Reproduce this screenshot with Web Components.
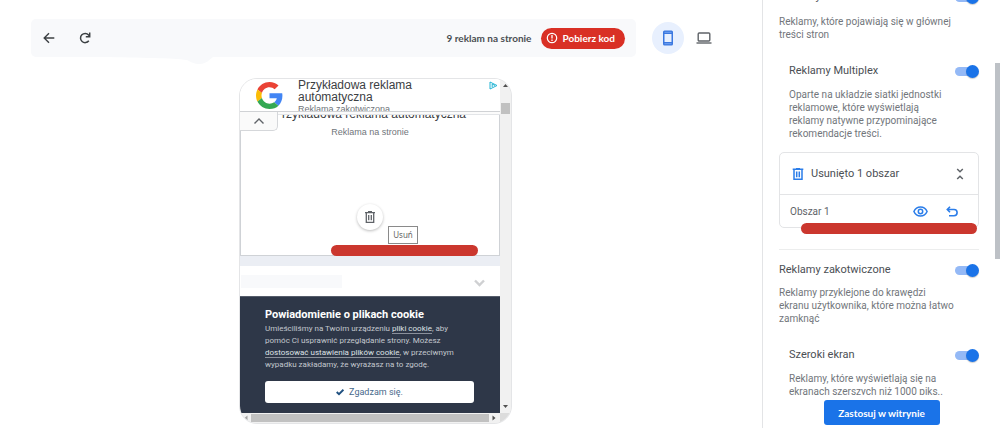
<!DOCTYPE html>
<html lang="pl">
<head>
<meta charset="utf-8">
<title>Reklamy automatyczne</title>
<style>
  html, body { margin: 0; height: 100%; }
  body { font-family: Roboto, "Liberation Sans", sans-serif; background: #fff; color: #5f6368; overflow: hidden; }
</style>
</head>
<body>
<ads-app></ads-app>

<template id="t-app">
  <style>
    :host { display: flex; height: 100vh; overflow: hidden; }
    main { flex: 1; min-width: 0; display: flex; flex-direction: column; gap: 21px; padding: 19px 42px 0 31px; }
    phone-preview { align-self: center; }
  </style>
  <main>
    <preview-toolbar></preview-toolbar>
    <phone-preview>
      <anchor-ad slot="page"></anchor-ad>
      <page-ad slot="page"></page-ad>
      <site-header slot="page"></site-header>
      <cookie-notice slot="page"></cookie-notice>
    </phone-preview>
  </main>
  <settings-panel>
    <ad-setting class="first" label="Reklamy na stronie">Reklamy, które pojawiają się w głównej treści stron</ad-setting>
    <ad-setting nested label="Reklamy Multiplex">Oparte na układzie siatki jednostki reklamowe, które wyświetlają reklamy natywne przypominające rekomendacje treści.</ad-setting>
    <removed-areas></removed-areas>
    <ad-setting divided label="Reklamy zakotwiczone">Reklamy przyklejone do krawędzi<br>ekranu użytkownika, które można łatwo<br>zamknąć</ad-setting>
    <ad-setting nested label="Szeroki ekran">Reklamy, które wyświetlają się na ekranach szerszych niż 1000 piks..</ad-setting>
  </settings-panel>
</template>

<template id="t-toolbar">
  <style>
    :host { display: flex; align-items: center; font-family: "Google Sans", Lato, sans-serif; }
    button { border: 0; padding: 0; background: none; font: inherit; color: #3c4043; display: flex; align-items: center; justify-content: center; }
    .bar { position: relative; flex: 1; display: flex; align-items: center; height: 38px; padding: 0 11px 0 6px; background: #f8f9fb; border-radius: 5px; }
    .bump { position: absolute; left: 70px; top: 100%; }
    .icon { width: 24px; height: 24px; }
    .reload { margin-left: 12px; }
    .count { margin-left: auto; font-size: 10px; font-weight: 700; color: #4b4f53; }
    .bar .code { margin-left: 10px; height: 21px; padding: 0 10px 0 5px; gap: 4px; border-radius: 11px; background: #d93025; color: #fff; font-size: 10px; font-weight: 700; }
    .device { width: 32px; height: 32px; border-radius: 50%; }
    .device.on { margin: 0 4px 0 16px; background: #e8f0fe; }
  </style>
  <div class="bar">
    <svg class="bump" width="115" height="8" viewBox="0 0 115 8"><path d="M0 0H112C108 3 105 7 99 7S90 5 86 3C72 1 40 1 0 0Z" fill="#f8f9fb"/></svg>
    <button class="icon" aria-label="Wstecz"><svg width="12" height="12" viewBox="0 0 12 12" fill="none" stroke="#3c4043" stroke-width="1.4"><path d="M11.300 6H1.500M6 1.200L1.200 6L6 10.800"/></svg></button>
    <button class="icon reload" aria-label="Odśwież"><svg width="12" height="12" viewBox="0 0 12 12" fill="none" stroke="#3c4043" stroke-width="1.500"><path d="M9.800 8.800A4.600 4.600 0 1 1 9.600 3L10.400 3.900"/><path d="M6.800 4.700H10.700V.6"/></svg></button>
    <span class="count">9 reklam na stronie</span>
    <button class="code"><svg width="12" height="12" viewBox="0 0 12 12" fill="none" stroke="#fff"><circle cx="6" cy="6" r="4.700" stroke-width="1.200"/><path d="M6 3v3.600M6 7.600v1.300" stroke-width="1.300"/></svg>Pobierz kod</button>
  </div>
  <button class="device on" aria-label="Telefon"><svg width="12" height="16" viewBox="0 0 12 16"><rect x="1" y=".5" width="10" height="15" rx="1.500" fill="#3b78e0"/><rect x="2.500" y="4" width="7" height="8" fill="#e8f0fe"/><path d="M2.500 2.300h7M2.500 13.700h7" stroke="#8ab4f8" stroke-width=".7"/></svg></button>
  <button class="device" aria-label="Komputer"><svg width="16" height="12" viewBox="0 0 16 12" fill="none" stroke="#5f6368" stroke-width="1.400"><rect x="2.200" y="1" width="11.600" height="8" rx="1"/><path d="M.5 11H15.500"/></svg></button>
</template>

<template id="t-phone">
  <style>
    :host { display: grid; grid-template-columns: 260px 11px; border: 1px solid #e4e5e7; border-radius: 18px; overflow: hidden; background: #f1f1f1; }
    .view { display: flex; flex-direction: column; min-width: 0; overflow: hidden; background: #fff; }
    .v { display: flex; flex-direction: column; align-items: center; padding: 3px 0; background: #f1f1f1; }
    .v i { width: 9px; height: 11px; background: #c1c1c1; margin-top: 14px; }
    .v svg:last-child { margin-top: auto; }
    .h { display: flex; align-items: center; gap: 3px; padding: 0 4px; background: #f1f1f1; }
    .h i { flex: 1; height: 8px; background: #c1c1c1; }
    .corner { height: 10px; background: #dcdcdc; }
  </style>
  <div class="view"><slot name="page"></slot></div>
  <div class="v">
    <svg width="7" height="7"><path d="M1 5L3.500 2L6 5Z" fill="#505050"/></svg><i></i><svg width="7" height="7"><path d="M1 2L3.500 5L6 2Z" fill="#505050"/></svg>
  </div>
  <div class="h">
    <svg width="4" height="6"><path d="M3.500 .5L.5 3L3.500 5.500Z" fill="#a3a3a3"/></svg><i></i><svg width="4" height="6"><path d="M.5 .5L3.500 3L.5 5.500Z" fill="#505050"/></svg>
  </div>
  <div class="corner"></div>
</template>

<template id="t-anchor">
  <style>
    :host { display: block; position: relative; z-index: 1; font-family: "Liberation Sans", Arial, sans-serif; }
    .ad { display: flex; height: 33px; padding: 0 2px 0 16px; box-sizing: border-box; background: #fff; border-bottom: 1px solid #d0d2d5; overflow: hidden; }
    .logo { flex: none; margin: 3px 15px 0 0; }
    .text { flex: 1; font-size: 12px; line-height: 12px; color: #3c4043; }
    .text small { display: block; font-size: 9px; color: #70757a; }
    .info { margin-top: 2px; }
    .strip { height: 3px; background: #fbfbfb; border-bottom: 1px solid #e3e5e8; box-sizing: border-box; }
    button { position: absolute; left: 0; top: 33px; width: 38px; height: 19px; padding: 0; border: 1px solid #d5d7da; border-width: 0 1px 1px 0; border-radius: 0 0 5px 0; background: #fafafa; display: flex; align-items: center; justify-content: center; }
  </style>
  <div class="ad">
    <svg class="logo" width="27" height="27" viewBox="0 0 48 48"><path fill="#EA4335" d="M24 9.500c3.540 0 6.710 1.220 9.210 3.600l6.850-6.850C35.900 2.380 30.470 0 24 0 14.620 0 6.510 5.380 2.560 13.220l7.980 6.190C12.430 13.720 17.740 9.500 24 9.500z"/><path fill="#4285F4" d="M46.980 24.550c0-1.570-.15-3.090-.38-4.550H24v9.020h12.940c-.58 2.960-2.260 5.480-4.780 7.180l7.730 6c4.510-4.180 7.090-10.360 7.090-17.650z"/><path fill="#FBBC05" d="M10.530 28.590c-.48-1.450-.76-2.990-.76-4.590s.27-3.140.76-4.590l-7.980-6.190C.92 16.460 0 20.120 0 24s.92 7.540 2.560 10.780l7.970-6.190z"/><path fill="#34A853" d="M24 48c6.480 0 11.930-2.130 15.890-5.810l-7.730-6c-2.150 1.450-4.920 2.300-8.160 2.300-6.260 0-11.570-4.220-13.470-9.910l-7.980 6.190C6.510 42.620 14.620 48 24 48z"/></svg>
    <div class="text">Przykładowa reklama<br>automatyczna<small>Reklama zakotwiczona</small></div>
    <svg class="info" width="9" height="9" viewBox="0 0 9 9" fill="none" stroke="#24b4d4" stroke-width="1"><path d="M1 1L8 4.500L1 8Z"/><path d="M3.200 3v3M3.200 3L6 4.500"/></svg>
  </div>
  <div class="strip"></div>
  <button aria-label="Zwiń"><svg width="12" height="8" viewBox="0 0 12 8" fill="none" stroke="#5f6368" stroke-width="1.400"><path d="M1.500 6.500L6 2L10.500 6.500"/></svg></button>
</template>

<template id="t-pagead">
  <style>
    :host { display: block; position: relative; height: 141px; box-sizing: border-box; overflow: visible; border: 1px solid #cfd2d6; border-top: 0; text-align: center; font-family: "Liberation Sans", Arial, sans-serif; }
    .title { margin-top: -7px; font-size: 12px; line-height: 12px; color: #3c4043; }
    .sub { margin-top: 6px; font-size: 9px; line-height: 12px; color: #70757a; }
    button { position: absolute; left: 50%; top: 89px; width: 26px; height: 26px; margin-left: -13px; padding: 0; border: 0; border-radius: 50%; background: #fff; box-shadow: 0 1px 3px #0004; display: flex; align-items: center; justify-content: center; }
    .tip { position: absolute; left: 147px; top: 111px; width: 28px; height: 16px; border: 1px solid #8a8a8a; background: #fff; font: 8px/16px "Noto Sans", sans-serif; color: #666; }
    .mark { position: absolute; left: 90px; right: 21px; bottom: -1px; height: 11px; border-radius: 6px; background: #cb372e; }
  </style>
  <div class="title">Przykładowa reklama automatyczna</div>
  <div class="sub">Reklama na stronie</div>
  <button aria-label="Usuń"><svg width="12" height="12" viewBox="0 0 12 12" fill="none" stroke="#5f6368" stroke-width="1.300"><path d="M1 1.700H11M4 .7H8M2.300 2V11.300H9.700V2M4.700 4V9.300M7.300 4V9.300"/></svg></button>
  <div class="tip" role="tooltip">Usuń</div>
  <div class="mark"></div>
</template>

<template id="t-site">
  <style>
    :host { display: block; border-top: 10px solid #ebeef4; }
    .row { display: flex; justify-content: space-between; align-items: center; height: 30px; padding: 0 15px 0 1px; }
    .name { width: 101px; height: 13px; background: #f8f9fb; }
    button { border: 0; padding: 0; background: none; display: flex; margin-top: 4px; }
  </style>
  <div class="row"><span class="name"></span><button aria-label="Rozwiń"><svg width="11" height="8" viewBox="0 0 11 8" fill="none" stroke="#cfd0d2" stroke-width="2.400"><path d="M1 1.500L5.500 6L10 1.500"/></svg></button></div>
</template>

<template id="t-cookie">
  <style>
    :host { display: block; padding: 11px 26px 10px 25px; background: #2e3748; color: #c3c7ce; border-top: 1px solid #565d6b; }
    h2 { margin: 0; font-size: 11px; line-height: 14px; font-weight: 700; color: #fff; white-space: nowrap; }
    p { margin: 1px 0 10px; font-size: 8px; line-height: 12px; white-space: nowrap; }
    a { color: #dfe2e6; text-decoration: none; border-bottom: 1px solid #8a909b; }
    button { width: 100%; height: 22px; border: 0; border-radius: 3px; background: #fff; color: #47698b; font: 9px Roboto, sans-serif; display: flex; align-items: center; justify-content: center; gap: 5px; padding: 0; }
  </style>
  <h2>Powiadomienie o plikach cookie</h2>
  <p>Umieściliśmy na Twoim urządzeniu <a href="#cookie">pliki cookie</a>, aby<br>pomóc Ci usprawnić przeglądanie strony. Możesz<br><a href="#ustawienia">dostosować ustawienia plików cookie</a>, w przeciwnym<br>wypadku zakładamy, że wyrażasz na to zgodę.</p>
  <button><svg width="8" height="8" viewBox="0 0 8 8" fill="none" stroke="#1f5080" stroke-width="1.900"><path d="M.7 4L3 6.200L7.400 1.700"/></svg>Zgadzam się.</button>
</template>

<template id="t-panel">
  <style>
    :host { display: flex; flex-direction: column; position: relative; width: 237px; flex: none; border-left: 1px solid #e3e4e6; background: #fff; }
    .scroll { flex: 1; min-height: 0; overflow: hidden; padding: 0 21px 0 16px; }
    ::slotted(.first) { margin-top: -10px; }
    footer { height: 33px; box-sizing: border-box; padding-top: 5px; display: flex; justify-content: center; }
    button { width: 116px; height: 25px; border: 0; border-radius: 3px; padding: 0; background: #1a73e8; color: #fff; font: 700 10px "Google Sans", Lato, sans-serif; }
    .thumb { position: absolute; right: 0; top: 63px; width: 5px; height: 196px; background: #bdc1c6; }
  </style>
  <div class="scroll"><slot></slot></div>
  <footer><button>Zastosuj w witrynie</button></footer>
  <div class="thumb"></div>
</template>

<template id="t-setting">
  <style>
    :host { display: block; }
    :host([nested]) { padding: 23px 0 0 10px; --gap: 10px; }
    :host([divided]) { border-top: 1px solid #eceded; margin-top: 21px; padding-top: 13px; --gap: 9px; }
    .head { display: flex; align-items: center; justify-content: space-between; height: 14px; }
    label { font-size: 11px; line-height: 14px; color: #4b4f54; }
    input { appearance: none; margin: 0; width: 24px; height: 13px; position: relative; }
    input::before { content: ""; position: absolute; left: 0; top: 2px; width: 20px; height: 9px; border-radius: 5px; background: #94b9f6; }
    input::after { content: ""; position: absolute; right: 0; top: 0; width: 13px; height: 13px; border-radius: 50%; background: #1a73e8; box-shadow: 0 1px 1px #0003; }
    p { margin: var(--gap, 11px) 0 0; font-size: 10px; line-height: 13px; color: #72767b; max-width: 184px; }
    :host([nested]) p { max-width: 155px; }
  </style>
  <div class="head"><label for="s"></label><input type="checkbox" role="switch" id="s" checked></div>
  <p><slot></slot></p>
</template>

<template id="t-removed">
  <style>
    :host { display: block; position: relative; margin-top: 12px; border: 1px solid #e3e4e6; border-radius: 5px; }
    div { display: flex; align-items: center; }
    button { border: 0; background: none; padding: 0; display: flex; }
    .head { height: 41px; padding: 0 14px 0 12px; gap: 7px; font-size: 11px; color: #4b4f54; border-bottom: 1px solid #e3e4e6; }
    .head button, .row .eye { margin-left: auto; }
    .row { height: 32px; padding: 0 20px 0 10px; gap: 18px; font-size: 10px; color: #5f6368; }
    .mark { position: absolute; left: 21px; right: 1px; bottom: -7px; height: 11px; border-radius: 6px; background: #cb372e; }
  </style>
  <div class="head">
    <svg width="12" height="12" viewBox="0 0 12 12" fill="none" stroke="#2b7de9" stroke-width="1.500"><path d="M.7 1.300H11.300M4 .7H8M2 1.500V11.300H10V1.500M4.700 3.500V9.300M7.300 3.500V9.300"/></svg>
    <span>Usunięto 1 obszar</span>
    <button aria-label="Zwiń"><svg width="8" height="12" viewBox="0 0 8 12" fill="none" stroke="#5f6368" stroke-width="1.500"><path d="M1.200 1L4 3.700L6.800 1M1.200 11L4 8.300L6.800 11"/></svg></button>
  </div>
  <div class="row">
    <span>Obszar 1</span>
    <button class="eye" aria-label="Pokaż"><svg width="15" height="11" viewBox="0 0 15 11" fill="none" stroke="#2b7de9" stroke-width="1.500"><path d="M.9 5.500C2.200 2.600 4.600 1 7.500 1S12.800 2.600 14.100 5.500C12.800 8.400 10.400 10 7.500 10S2.200 8.400 .9 5.500Z"/><circle cx="7.500" cy="5.500" r="2.200"/></svg></button>
    <button aria-label="Cofnij"><svg width="12" height="11" viewBox="0 0 12 11" fill="none" stroke="#2b7de9" stroke-width="1.600"><path d="M4 .8L1.300 3.500L4 6.200M1.500 3.500H8A3 3 0 0 1 8 9.700H3"/></svg></button>
  </div>
  <div class="mark"></div>
</template>

<script>
  // Every component clones its own template into an open shadow root.
  const component = (tag, templateId, setup) => {
    customElements.define(tag, class extends HTMLElement {
      constructor() {
        super();
        this.attachShadow({ mode: 'open' })
          .append(document.getElementById(templateId).content.cloneNode(true));
      }
      connectedCallback() { if (setup) setup(this); }
    });
  };
  component('preview-toolbar', 't-toolbar');
  component('phone-preview', 't-phone');
  component('anchor-ad', 't-anchor');
  component('page-ad', 't-pagead');
  component('site-header', 't-site');
  component('cookie-notice', 't-cookie');
  component('settings-panel', 't-panel');
  component('ad-setting', 't-setting', el => {
    el.shadowRoot.querySelector('label').textContent = el.getAttribute('label');
  });
  component('removed-areas', 't-removed');
  component('ads-app', 't-app');
</script>
</body>
</html>
